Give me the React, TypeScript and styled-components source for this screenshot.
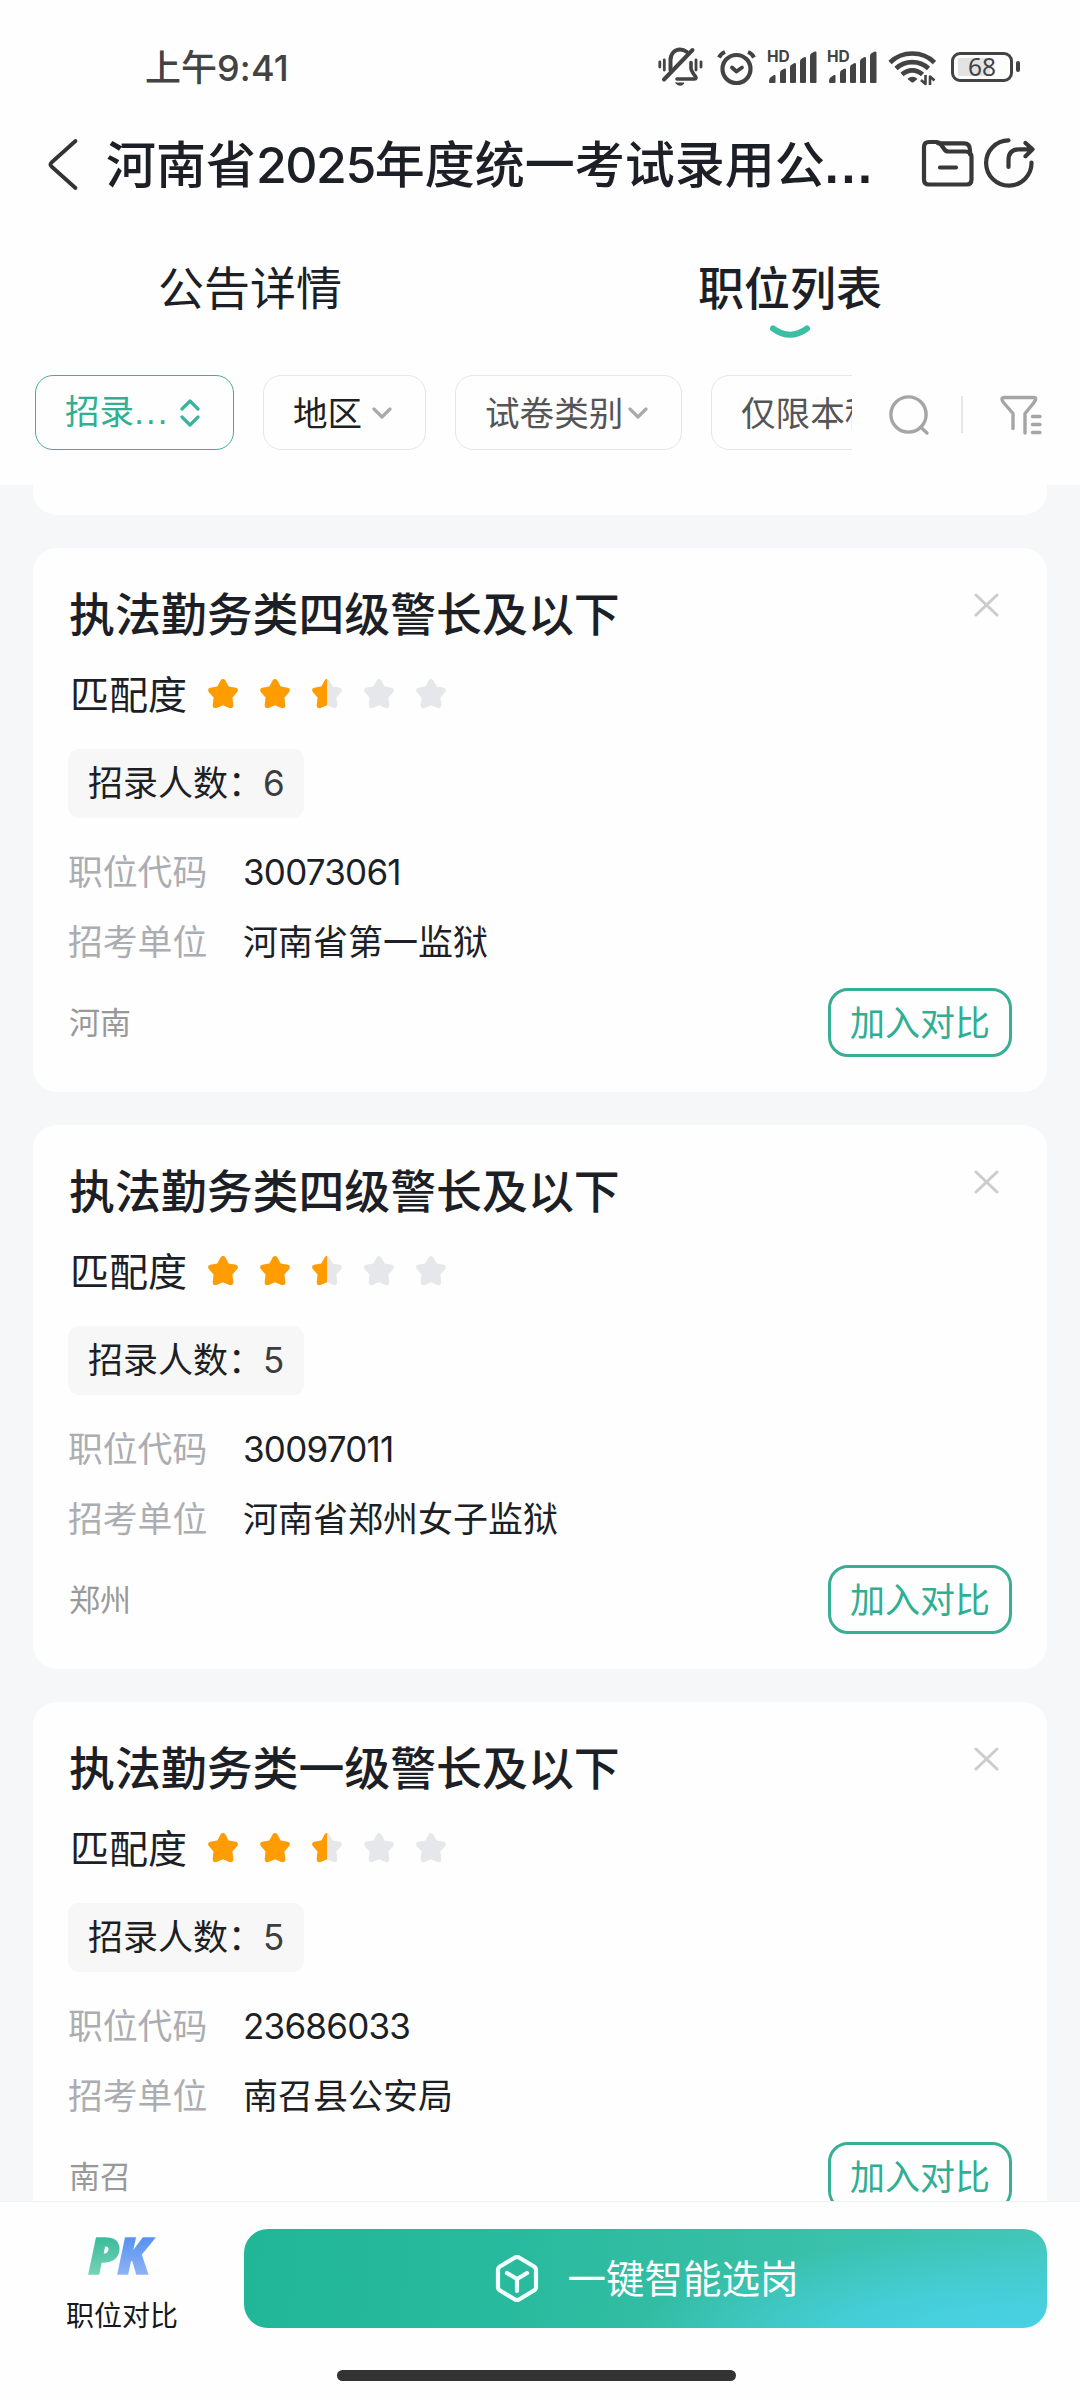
import React from "react";
import styled, { createGlobalStyle, css } from "styled-components";

const cjk = '"Noto Sans CJK SC", sans-serif';

const GlobalStyle = createGlobalStyle`
  * { box-sizing: border-box; }
  html, body { margin: 0; padding: 0; background: #f5f7f9; }
  body { font-family: ${cjk}; color: #1d1f26; }
  button { font: inherit; background: none; border: 0; padding: 0; margin: 0; }
  svg { display: block; flex: none; }
`;

const Screen = styled.div`
  width: 1080px;
  height: 2400px;
  display: flex;
  flex-direction: column;
  overflow: hidden;
  background: #f5f7f9;
`;

const Top = styled.header`
  flex: none;
  height: 485px;
  background: #fefefe;
  display: flex;
  flex-direction: column;
`;

const StatusBar = styled.div`
  height: 132px;
  padding: 0 60px 0 145px;
  display: flex;
  align-items: center;
  justify-content: space-between;
  color: #434343;
`;

const Clock = styled.div`
  font-size: 36px;
  line-height: 40px;
  font-weight: 500;
`;

const Digits = styled.span<{ $spacing?: number }>`
  font-family: Inter, ${cjk};
  letter-spacing: ${(p) => p.$spacing ?? -0.022}em;
`;

const Dots = styled.span<{ $spacing: number; $bold?: boolean }>`
  font-family: "Liberation Sans", sans-serif;
  font-weight: ${(p) => (p.$bold ? 700 : 400)};
  letter-spacing: ${(p) => p.$spacing}px;
`;

const StatusIcons = styled.div`
  display: flex;
  align-items: center;
  gap: 0;
  padding-top: 1px;
`;

const TitleBar = styled.div`
  height: 66px;
  display: flex;
  align-items: center;
  padding-left: 46px;
`;

const Title = styled.h1`
  margin: 0 0 4px 25px;
  width: 817px;
  font-size: 50px;
  line-height: 62px;
  font-weight: 500;
  white-space: nowrap;
`;

const Tabs = styled.nav`
  height: 177px;
  display: flex;
  gap: 40px;
  padding-top: 56px;
`;

const Tab = styled.div<{ $active?: boolean }>`
  width: 500px;
  display: flex;
  flex-direction: column;
  align-items: center;
  gap: 9px;
  font-size: 46px;
  line-height: 62px;
  font-weight: ${(p) => (p.$active ? 500 : 400)};
`;

const Filters = styled.div`
  height: 75px;
  display: flex;
  align-items: center;
  padding-left: 35px;
`;

const ChipList = styled.div`
  width: 817px;
  display: flex;
  gap: 29px;
  overflow: hidden;
`;

const chipTones = {
  active: css`
    color: #2fb093;
    border-color: #3fae94;
  `,
  dark: css`
    color: #1d1f22;
  `,
  plain: css`
    color: #555;
  `,
};

const Chip = styled.button<{ $tone: keyof typeof chipTones; $width: number }>`
  flex: none;
  width: ${(p) => p.$width}px;
  height: 75px;
  padding: 0 33px 4px 29px;
  display: flex;
  align-items: center;
  justify-content: space-between;
  border: 1px solid #e6e6e6;
  border-radius: 18px;
  font-size: 34.6px;
  line-height: 40px;
  white-space: nowrap;
  ${(p) => chipTones[p.$tone]}

  svg {
    margin-top: 5px;
  }
`;

const FilterTools = styled.div`
  display: flex;
  align-items: center;
  padding-left: 36px;
`;

const ToolDivider = styled.i`
  width: 2px;
  height: 37px;
  margin: 4px 36px 0 31px;
  background: #e6e6e6;
`;

const List = styled.main`
  flex: 1;
  min-height: 0;
  overflow: hidden;
  padding: 0 33px;
  display: flex;
  flex-direction: column;
  gap: 33px;
`;

const CardTail = styled.div`
  flex: none;
  height: 30px;
  background: #fefefe;
  border-radius: 0 0 24px 24px;
`;

const Card = styled.article`
  flex: none;
  height: 544px;
  padding: 31px 35px 35px 36px;
  background: #fefefe;
  border-radius: 24px;
  display: flex;
  flex-direction: column;
`;

const CardHead = styled.div`
  height: 70px;
  display: flex;
  justify-content: space-between;
  padding-right: 12px;
`;

const CardTitle = styled.h2`
  margin: 0;
  font-size: 45.9px;
  line-height: 64px;
  font-weight: 500;
`;

const CloseButton = styled.button`
  padding-top: 13px;
  align-self: flex-start;
`;

const MatchRow = styled.div`
  height: 60px;
  margin-top: 15px;
  display: flex;
  align-items: center;
  font-size: 39px;
  padding-left: 1px;
`;

const MatchLabel = styled.span`
  line-height: 56px;
  margin-bottom: 3px;
`;

const Stars = styled.div`
  display: flex;
  gap: 18px;
  margin: 2px 0 0 19px;
`;

const Tag = styled.div`
  align-self: flex-start;
  height: 69px;
  width: 236px;
  margin: 26px 0 0 -1px;
  padding-left: 20px;
  border-radius: 11px;
  background: #f7f7f7;
  font-size: 35px;
  line-height: 64px;
`;

const Count = styled(Digits)`
  color: #3d3d40;
`;

const Fields = styled.dl`
  margin: 17px 0 0;
  display: grid;
  grid-template-columns: 174px 1fr;
  grid-auto-rows: 70px;
  font-size: 35px;
  line-height: 70px;
`;

const Label = styled.dt`
  margin-left: -1px;
  font-size: 34.8px;
  color: #abadb2;
`;

const Value = styled.dd`
  margin: 0;
`;

const CardFoot = styled.div`
  height: 69px;
  margin-top: 13px;
  display: flex;
  align-items: center;
  justify-content: space-between;
`;

const Place = styled.span`
  padding-bottom: 4px;
  font-size: 31px;
  color: #999;
`;

const CompareButton = styled.button`
  width: 184px;
  height: 69px;
  padding-bottom: 4px;
  border: 3px solid #38ae95;
  border-radius: 20px;
  font-size: 35px;
  line-height: 59px;
  color: #2fae93;
`;

const BottomBar = styled.footer`
  flex: none;
  height: 199px;
  border-top: 1px solid #ecf1f1;
  background: #fefefe;
  display: flex;
  flex-direction: column;
  align-items: center;
`;

const BottomActions = styled.div`
  width: 100%;
  height: 140px;
  padding: 27px 33px 0 0;
  display: flex;
  align-items: flex-start;
`;

const ComparePanel = styled.div`
  width: 244px;
  display: flex;
  flex-direction: column;
  align-items: center;
  font-size: 28px;
  line-height: 40px;
  color: #17181c;
`;

const Pk = styled.div`
  height: 65px;
  padding-right: 5px;
  font-family: "Open Sans", sans-serif;
  font-weight: 800;
  font-style: italic;
  font-size: 50px;
  line-height: 52px;
  display: flex;
`;

const PkLetter = styled.span<{ $from: string; $to: string }>`
  padding: 0 6px;
  margin: 0 -7px;
  background: linear-gradient(180deg, ${(p) => p.$from} 15%, ${(p) => p.$to} 85%);
  background-clip: text;
  -webkit-background-clip: text;
  -webkit-text-stroke: 1.5px transparent;
  color: transparent;
`;

const SmartPick = styled.button`
  flex: 1;
  height: 99px;
  border-radius: 24px;
  display: flex;
  align-items: center;
  justify-content: center;
  gap: 28px;
  padding-left: 3px;
  font-size: 38.5px;
  color: #fff;
  background:
    radial-gradient(ellipse 380px 105px at 96% 112%, #4bd2e8 0%, rgba(70, 208, 222, 0.85) 45%, rgba(62, 196, 175, 0) 100%),
    linear-gradient(95deg, #22b699 0%, #27ba9d 30%, #36bea5 60%, #44c6ba 100%);
`;

const SmartPickLabel = styled.span`
  line-height: 58px;
  margin-bottom: 6px;
`;

const HomeIndicator = styled.div`
  width: 399px;
  height: 11px;
  margin: 28px 7px 0 0;
  border-radius: 6px;
  background: #333;
`;

const line = { fill: "none", strokeLinecap: "round", strokeLinejoin: "round" } as const;

const MutedBell = () => (
  <svg width="46" height="40" viewBox="658 48 46 40" {...line} stroke="#434343" strokeWidth="4">
    <path d="M670.500 71V61c0-6 4-10.500 9.500-10.500 3 0 5 1 7 2.500" />
    <path d="M664 80.500l28.500-29.500" />
    <path d="M691 63.500V69c0 3 2 5 4.500 8.500 1 1.500.500 2.500-1 2.500H677" strokeWidth="3.600" />
    <path d="M676 84h8c-1 3-7 3-8 0z" fill="#434343" strokeWidth="1" />
    <path d="M659.800 63v5M664.300 61v10M696 61v10M701 63v5" strokeWidth="2.800" />
  </svg>
);

const AlarmIcon = styled.svg`
  margin: 0 11px 0 13px;
`;

const Alarm = () => (
  <AlarmIcon width="40" height="38" viewBox="717 47 40 38" {...line} stroke="#434343">
    <circle cx="736.500" cy="68" r="14" strokeWidth="4.200" />
    <path d="M732 66.500l4.500 4 5.500-4" strokeWidth="3.800" />
    <path d="M719 56.500c1.500-3 3.500-4.500 6-5.500M754 56.500c-1.500-3-3.500-4.500-6-5.500" strokeWidth="4" strokeLinecap="butt" />
  </AlarmIcon>
);

const SignalBox = styled.div`
  width: 51px;
  height: 34px;
  display: grid;
  margin-right: 9px;
`;

const HdLabel = styled.span`
  grid-area: 1 / 1;
  font: 700 15.5px/16px Inter, sans-serif;
  margin: -1px 0 0 -1px;
`;

const SignalBars = styled.svg`
  grid-area: 1 / 1;
  margin-left: -1px;
`;

const Signal = () => (
  <SignalBox>
    <HdLabel>HD</HdLabel>
    <SignalBars width="51" height="34" viewBox="0 0 51 34" fill="#434343">
      <path d="M2 32q0-4 2-5l3-2q1.500-.5 1.500 1V32q0 1-1 1H3q-1 0-1-1z" />
      <path d="M13 32V23q0-2 1.500-2.700l2.500-1.600q2-.700 2 1V32q0 1-1 1h-4q-1 0-1-1z" />
      <path d="M23 32V17.500q0-2 1.500-2.700l2.500-1.600q2-.700 2 1V32q0 1-1 1h-4q-1 0-1-1z" />
      <path d="M33 32V11.500q0-2 1.500-2.700l2.500-1.600q2-.700 2 1V32q0 1-1 1h-4q-1 0-1-1z" />
      <path d="M43 32V6q0-2 1.500-2.700l2.500-1.600q2.500-.700 2.500 1V32q0 1-1 1h-4.500q-1 0-1-1z" />
    </SignalBars>
  </SignalBox>
);

const Wifi = () => (
  <svg width="48" height="38" viewBox="888.500 49 48 38" {...line} strokeLinecap="butt" stroke="#434343" strokeWidth="4.600">
    <path d="M890.500 63.500c12-12 32.500-12 44.500 0" />
    <path d="M896.500 69.500c9-8.500 23.500-8.500 32.500 0" />
    <path d="M902.500 75.500c6-5.500 14.500-5.500 20.500 0" />
    <path d="M908 80c3-3 7-3 10 0l-4 3.200q-1 .8-2 0z" fill="#434343" stroke="none" />
    <path d="M926 76v9l-4.500-4M930.500 86v-8.500l4.500 4" strokeWidth="2.600" />
  </svg>
);

const Battery = styled.div`
  width: 62px;
  height: 30px;
  margin-left: 15px;
  border: 3px solid #434343;
  border-radius: 9px;
  padding: 3px;
  font: 400 24.5px/18px "Noto Sans", sans-serif;
  text-align: center;
  background: linear-gradient(#e3e3e3, #e3e3e3) 4px 3px / 32px 18px no-repeat;
`;

const BatteryCap = styled.i`
  width: 4px;
  height: 11px;
  margin-left: 3px;
  border-radius: 2px;
  background: #434343;
`;

const Back = () => (
  <svg width="35" height="60" viewBox="46 135 35 60" {...line} stroke="#333" strokeWidth="3.800">
    <path d="M75.500 141L51.500 162.500q-2 2 0 4L75.500 188" />
  </svg>
);

const Folder = () => (
  <svg width="56" height="52" viewBox="919 139 56 52" {...line} stroke="#383838" strokeWidth="4.200">
    <path d="M929 143h8q2 0 3.500 2l4 5.500q1.300 2 4 2H965q6.500 0 6.500 5.500V180.500q0 5-5 5H929q-5 0-5-5V148q0-5 5-5z" />
    <path d="M938 144.300h26q6 0 6 7v4M940 168.500h16" />
  </svg>
);

const Share = () => (
  <svg width="54" height="54" viewBox="982 136 54 54" {...line} stroke="#383838" strokeWidth="4.200">
    <path d="M1008.500 139.300a22.700 22.700 0 1 0 23 22.200" />
    <path d="M1008.500 166v-7q0-10.700 11-10.700h12M1025.500 142l7 6.300-7 7" />
  </svg>
);

const HeaderActions = styled.div`
  display: flex;
  align-items: center;
  gap: 7px;
  margin-left: -4px;
  padding-bottom: 2px;
`;

const Smile = () => (
  <svg width="42" height="14" viewBox="0 0 42 14" {...line} stroke="#3abfa3" strokeWidth="6">
    <path d="M4 3.500q17 12.500 34 0" />
  </svg>
);

const Chevron = () => (
  <svg width="20" height="12" viewBox="0 0 20 12" {...line} stroke="#aaa" strokeWidth="3.200">
    <path d="M2 2l8 8 8-8" />
  </svg>
);

const UpDown = () => (
  <svg width="20" height="28" viewBox="0 0 20 28" {...line} stroke="#3bb59a" strokeWidth="3.200">
    <path d="M2 10l8-8 8 8M2 18l8 8 8-8" />
  </svg>
);

const Search = () => (
  <svg width="42" height="46" viewBox="0 0 42 46" {...line} stroke="#a5a5a5" strokeWidth="3.400">
    <circle cx="20.500" cy="24.500" r="17.600" />
    <path d="M33 37.500l6 5.500" />
  </svg>
);

const Funnel = () => (
  <svg width="44" height="46" viewBox="0 0 44 46" {...line} stroke="#a5a5a5" strokeWidth="3.400">
    <path d="M14 38.500V23.500L4.500 12.500q-3.500-5 1-5h29q4 0 .500 5L26 23.500V43M33.500 26.500H41M33.500 34.500H41M33.500 42.500H41" />
  </svg>
);

const Cross = () => (
  <svg width="26" height="26" viewBox="0 0 26 26" {...line} stroke="#ccc" strokeWidth="3">
    <path d="M2 3l21 20M23 3L2 23" />
  </svg>
);

const starPath =
  "M14.600 2.400q2.400-3 4.800 0l3.200 6 7 1.300q3.600 1 1.600 4.200l-4.800 5.700.9 7.400q0 4-3.800 2.900L17 27.200l-6.500 2.700q-3.800 1.100-3.800-2.900l.9-7.400L2.800 13.900q-2-3.200 1.600-4.200l7-1.300z";

const Star = ({ fill }: { fill: number }) => (
  <svg width="34" height="34" viewBox="0 -1 34 34">
    <path d={starPath} fill="#e5e7ea" />
    {fill > 0 && (
      <path d={starPath} fill="#ff9c00" style={{ clipPath: `inset(0 ${(1 - fill) * 100}% 0 0)` }} />
    )}
  </svg>
);

const Cube = () => (
  <svg width="44" height="49" viewBox="0 0 44 49" {...line} stroke="#f2fffc" strokeWidth="4.200">
    <path d="M20 3.500q2-1 4 0l15 9q2 1.200 2 3.500v17q0 2.300-2 3.500l-15 9q-2 1-4 0l-15-9q-2-1.200-2-3.500V16q0-2.300 2-3.500z" />
    <path d="M12 19l10 6 10-6M22 25v12" />
  </svg>
);

interface Job {
  title: string;
  count: number;
  code: string;
  unit: string;
  place: string;
}

const jobs: Job[] = [
  { title: "执法勤务类四级警长及以下", count: 6, code: "30073061", unit: "河南省第一监狱", place: "河南" },
  { title: "执法勤务类四级警长及以下", count: 5, code: "30097011", unit: "河南省郑州女子监狱", place: "郑州" },
  { title: "执法勤务类一级警长及以下", count: 5, code: "23686033", unit: "南召县公安局", place: "南召" },
];

const JobCard = ({ job }: { job: Job }) => (
  <Card>
    <CardHead>
      <CardTitle>{job.title}</CardTitle>
      <CloseButton aria-label="关闭"><Cross /></CloseButton>
    </CardHead>
    <MatchRow>
      <MatchLabel>匹配度</MatchLabel>
      <Stars>
        {[1, 1, 0.5, 0, 0].map((f, i) => <Star key={i} fill={f} />)}
      </Stars>
    </MatchRow>
    <Tag>招录人数：<Count>{job.count}</Count></Tag>
    <Fields>
      <Label>职位代码</Label>
      <Value><Digits>{job.code}</Digits></Value>
      <Label>招考单位</Label>
      <Value>{job.unit}</Value>
    </Fields>
    <CardFoot>
      <Place>{job.place}</Place>
      <CompareButton>加入对比</CompareButton>
    </CardFoot>
  </Card>
);

export default function App() {
  return (
    <Screen>
      <GlobalStyle />
      <Top>
        <StatusBar>
          <Clock>上午<Digits $spacing={0.005}>9:41</Digits></Clock>
          <StatusIcons>
            <MutedBell />
            <Alarm />
            <Signal />
            <Signal />
            <Wifi />
            <Battery>68</Battery>
            <BatteryCap />
          </StatusIcons>
        </StatusBar>
        <TitleBar>
          <Back />
          <Title>
            河南省<Digits $spacing={-0.03}>2025</Digits>年度统一考试录用公<Dots $bold $spacing={2.7}>...</Dots>
          </Title>
          <HeaderActions>
            <Folder />
            <Share />
          </HeaderActions>
        </TitleBar>
        <Tabs>
          <Tab>公告详情</Tab>
          <Tab $active>职位列表<Smile /></Tab>
        </Tabs>
        <Filters>
          <ChipList>
            <Chip $tone="active" $width={199}>
              <span>招录<Dots $spacing={2.2}>...</Dots></span>
              <UpDown />
            </Chip>
            <Chip $tone="dark" $width={163}>地区<Chevron /></Chip>
            <Chip $tone="plain" $width={227}>试卷类别<Chevron /></Chip>
            <Chip $tone="plain" $width={260}>仅限本科<Chevron /></Chip>
          </ChipList>
          <FilterTools>
            <Search />
            <ToolDivider />
            <Funnel />
          </FilterTools>
        </Filters>
      </Top>
      <List>
        <CardTail />
        {jobs.map((job) => <JobCard key={job.code} job={job} />)}
      </List>
      <BottomBar>
        <BottomActions>
          <ComparePanel>
            <Pk>
              <PkLetter $from="#3dbb9c" $to="#86d9c0">P</PkLetter>
              <PkLetter $from="#5793ef" $to="#9dbcf6">K</PkLetter>
            </Pk>
            职位对比
          </ComparePanel>
          <SmartPick><Cube /><SmartPickLabel>一键智能选岗</SmartPickLabel></SmartPick>
        </BottomActions>
        <HomeIndicator />
      </BottomBar>
    </Screen>
  );
}
